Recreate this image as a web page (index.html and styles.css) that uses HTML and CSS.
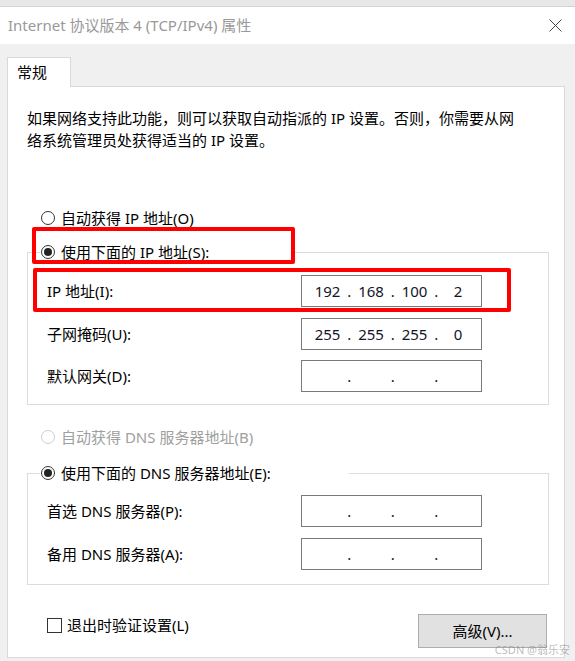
FILE: index.html
```html
<!DOCTYPE html>
<html lang="zh-CN">
<head>
<meta charset="utf-8">
<title>Internet 协议版本 4 (TCP/IPv4) 属性</title>
<link rel="stylesheet" href="styles.css">
</head>
<body>
<div class="window">
  <div class="topstrip"></div>
  <div class="titlebar">
    <span class="title">Internet 协议版本 4 (TCP/IPv4) 属性</span>
    <svg class="close" width="13" height="13" viewBox="0 0 13 13"><path d="M0.5 0.5 L12.5 12.5 M12.5 0.5 L0.5 12.5" stroke="#444" stroke-width="1" fill="none"/></svg>
  </div>
  <div class="content">
    <div class="tabs"><div class="tab">常规</div></div>
    <div class="panel">
      <p class="desc">如果网络支持此功能，则可以获取自动指派的 IP 设置。否则，你需要从网<br>络系统管理员处获得适当的 IP 设置。</p>

      <div class="radio radio-top"><span class="rb"></span><span>自动获得 IP 地址(O)</span></div>

      <div class="group group-ip">
        <div class="radio legend legend-ip"><span class="rb checked"></span><span>使用下面的 IP 地址(S):</span></div>
        <div class="rows">
          <div class="row"><span class="label">IP 地址(I):</span>
            <div class="ipbox"><span class="seg">192</span><span class="dot">.</span><span class="seg">168</span><span class="dot">.</span><span class="seg">100</span><span class="dot">.</span><span class="seg">2</span></div></div>
          <div class="row"><span class="label">子网掩码(U):</span>
            <div class="ipbox"><span class="seg">255</span><span class="dot">.</span><span class="seg">255</span><span class="dot">.</span><span class="seg">255</span><span class="dot">.</span><span class="seg">0</span></div></div>
          <div class="row"><span class="label">默认网关(D):</span>
            <div class="ipbox"><span class="seg"></span><span class="dot">.</span><span class="seg"></span><span class="dot">.</span><span class="seg"></span><span class="dot">.</span><span class="seg"></span></div></div>
        </div>
      </div>

      <div class="radio radio-dns disabled"><span class="rb"></span><span>自动获得 DNS 服务器地址(B)</span></div>

      <div class="group group-dns">
        <div class="radio legend legend-dns"><span class="rb checked"></span><span>使用下面的 DNS 服务器地址(E):</span></div>
        <div class="rows rows-dns">
          <div class="row"><span class="label">首选 DNS 服务器(P):</span>
            <div class="ipbox"><span class="seg"></span><span class="dot">.</span><span class="seg"></span><span class="dot">.</span><span class="seg"></span><span class="dot">.</span><span class="seg"></span></div></div>
          <div class="row"><span class="label">备用 DNS 服务器(A):</span>
            <div class="ipbox"><span class="seg"></span><span class="dot">.</span><span class="seg"></span><span class="dot">.</span><span class="seg"></span><span class="dot">.</span><span class="seg"></span></div></div>
        </div>
      </div>

      <div class="footer">
        <div class="check"><span class="cb"></span><span>退出时验证设置(L)</span></div>
        <div class="button">高级(V)...</div>
      </div>
    </div>
  </div>
  <div class="mark mark-1"></div>
  <div class="mark mark-2"></div>
  <div class="watermark">CSDN @翁乐安</div>
</div>
</body>
</html>
```
FILE: styles.css
```css
* { box-sizing: border-box; }
html, body { margin: 0; padding: 0; }
body {
  width: 575px;
  height: 661px;
  overflow: hidden;
  background: #f0f0f0;
  font-family: "Noto Sans", "Noto Sans CJK SC", sans-serif;
  font-size: 15px;
  color: #000;
}
.window { position: relative; width: 575px; height: 661px; }
.topstrip {
  height: 7px;
  background: #e8e8e8;
  border-bottom: 1px solid #d4d4d4;
}
.titlebar {
  height: 37px;
  background: #fff;
  display: flex;
  align-items: center;
  justify-content: space-between;
  padding: 0 13px 0 8px;
}
.title { color: #999; font-size: 15px; line-height: 20px; margin-top: -1px; }
.close { margin-top: -1px; }
.content { padding: 13px 10px 0 7px; }
.tabs { display: flex; }
.tab {
  width: 64px;
  height: 30px;
  background: #fff;
  border: 1px solid #d9d9d9;
  border-bottom: none;
  margin-bottom: -1px;
  position: relative;
  z-index: 1;
  padding-left: 9px;
  line-height: 28px;
  font-size: 15px;
}
.panel {
  height: 572px;
  background: #fff;
  border: 1px solid #d9d9d9;
  padding: 0;
}
.desc {
  margin: 20px 0 0 19px;
  line-height: 22px;
}
.radio {
  display: flex;
  align-items: center;
  height: 20px;
  line-height: 20px;
}
.rb {
  width: 14px;
  height: 14px;
  border: 1px solid #333;
  border-radius: 50%;
  margin-right: 6px;
  display: flex;
  align-items: center;
  justify-content: center;
  background: #fff;
  flex: none;
}
.rb.checked::after {
  content: "";
  width: 8px;
  height: 8px;
  border-radius: 50%;
  background: #222;
}
.radio.disabled { color: #a0a0a0; }
.radio.disabled .rb { border-color: #cdcdcd; }
.radio-top { margin: 57px 0 0 33px; }
.group {
  margin-left: 19px;
  width: 522px;
  border: 1px solid #dcdcdc;
}
.group-ip { margin-top: 24px; padding-bottom: 12px; }
.group-dns { margin-top: 26px; padding-bottom: 14px; }
.legend {
  margin-top: -12px;
  margin-left: 12px;
  height: 22px;
  background: #fff;
  padding-left: 1px;
}
.legend-ip { width: 255px; }
.legend-dns { width: 309px; }
.rows {
  display: flex;
  flex-direction: column;
  gap: 10.5px;
  margin-top: 12px;
  padding-left: 19px;
}
.rows-dns { margin-top: 11px; gap: 11px; }
.row {
  display: flex;
  align-items: center;
  height: 32px;
}
.label { width: 254px; line-height: 20px; }
.ipbox {
  width: 181px;
  height: 32px;
  border: 1px solid #7a7a7a;
  display: flex;
  align-items: center;
  padding-left: 8px;
  line-height: 20px;
  color: #141428;
}
.seg { width: 35px; text-align: center; }
.dot { width: 8.5px; text-align: center; }
.radio-dns { margin: 22px 0 0 33px; }
.footer {
  display: flex;
  justify-content: space-between;
  align-items: flex-start;
  margin: 29px 17px 0 39px;
}
.check {
  display: flex;
  align-items: center;
  height: 20px;
  margin-top: 1px;
  line-height: 20px;
}
.cb {
  width: 15px;
  height: 15px;
  border: 1px solid #333;
  background: #fff;
  margin-right: 5px;
}
.button {
  width: 129px;
  height: 34px;
  background: #e1e1e1;
  border: 1px solid #adadad;
  display: flex;
  align-items: center;
  justify-content: center;
  line-height: 20px;
}
.mark {
  position: absolute;
  border: 4px solid #f00;
  border-radius: 2px;
}
.mark-1 { left: 32px; top: 227px; width: 263px; height: 37px; }
.mark-2 { left: 33px; top: 268px; width: 478px; height: 44px; }
.watermark {
  position: absolute;
  right: 5px;
  bottom: 5px;
  font-size: 11px;
  line-height: 13px;
  color: rgba(130, 130, 130, 0.55);
}
```
